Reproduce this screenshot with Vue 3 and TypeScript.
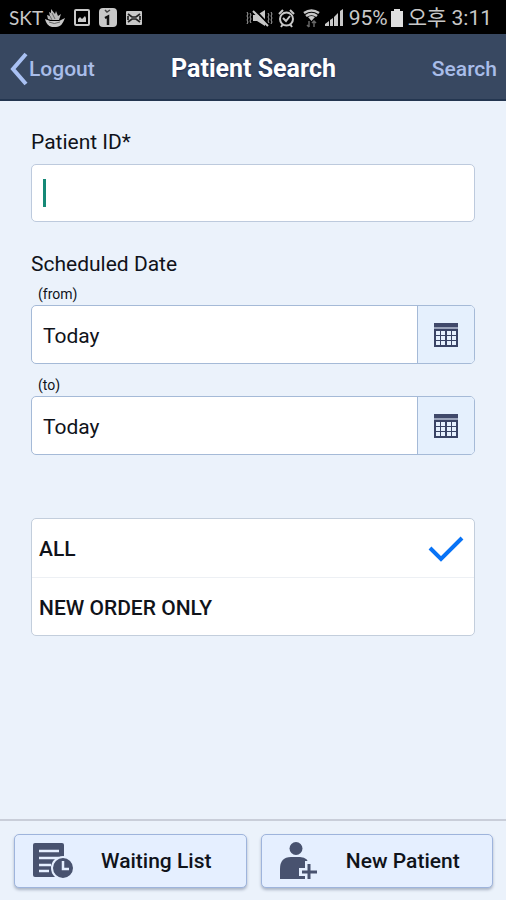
<script setup lang="ts">
import { ref } from 'vue'

type OrderFilter = 'all' | 'new'

interface FilterOption {
  value: OrderFilter
  label: string
}

interface DateField {
  id: string
  caption: string
  value: string
}

const patientId = ref('')
const selectedFilter = ref<OrderFilter>('all')
const dates = ref<DateField[]>([
  { id: 'date-from', caption: '(from)', value: 'Today' },
  { id: 'date-to', caption: '(to)', value: 'Today' },
])
const filters: FilterOption[] = [
  { value: 'all', label: 'ALL' },
  { value: 'new', label: 'NEW ORDER ONLY' },
]
</script>

<template>
  <div class="screen">
    <div class="status">
      <div class="status-group status-left">
        <span class="carrier">SKT</span>
        <svg class="ship" width="20" height="20" viewBox="0 0 20 20" aria-hidden="true">
          <path d="M0 11 5 13H14L20 10C18 15 16 19 11 19H7C3 18 1 15 0 11Z" fill="#c8c8c8" />
          <path d="M3 11 2 7 5 8 4 4 6 5 6 1 10 6 11 3 13 8 16 6 14 12H6Z" fill="#b8b8b8" />
          <path d="M4 14Q9 17 15 14M7 5 10 11M5 8 7 12" fill="none" stroke="#666" />
        </svg>
        <svg width="18" height="18" viewBox="0 0 18 18" aria-hidden="true">
          <rect x="2" y="1" width="14" height="15" rx="1" fill="none" stroke="#c8c8c8" stroke-width="2" />
          <path d="M5 13V10L7 8 9 10 12 7 13 9V13Z" fill="#c8c8c8" />
        </svg>
        <svg width="18" height="20" viewBox="0 0 18 20" aria-hidden="true">
          <rect width="18" height="19" rx="4" fill="#c8c8c8" />
          <path d="M6 2 8 4 11 2" fill="none" stroke="#444" stroke-width="1.500" />
          <path d="M6 10 9 8.500V17" fill="none" stroke="#111" stroke-width="2.500" />
        </svg>
        <svg width="18" height="16" viewBox="0 0 18 16" aria-hidden="true">
          <rect x="1" y="1" width="16" height="14" rx="1" fill="#c8c8c8" />
          <path d="M3 4 7 7H11L15 4M3 12 7 9H11L15 12M3 6V10M15 6V10" fill="none" stroke="#222" stroke-width="1.700" />
        </svg>
      </div>
      <div class="status-group status-right">
        <svg width="27" height="20" viewBox="0 0 27 20" aria-hidden="true">
          <path d="M7 7H11L19 2V18L11 13H7Z" fill="#c8c8c8" />
          <path d="M9 2 23 17" stroke="#000" stroke-width="2" />
          <path d="M7 3 22 18" stroke="#c8c8c8" stroke-width="2" />
          <path d="M1 4 2 6 1 8 2 10 1 12 2 14 1 16M4 5 5 7 4 9 5 11 4 13 5 15M22 5 23 7 22 9 23 11 22 13 23 15M25 4 26 6 25 8 26 10 25 12 26 14 25 16" fill="none" stroke="#a8a8a8" />
        </svg>
        <svg width="17" height="19" viewBox="0 0 17 19" aria-hidden="true">
          <circle cx="8.500" cy="10" r="6.500" fill="none" stroke="#c8c8c8" stroke-width="2" />
          <path d="M1 5 5 1M16 5 12 1M3 18 5 15M14 18 12 15M5 9 8 12 12 7" fill="none" stroke="#c8c8c8" stroke-width="2" />
        </svg>
        <svg class="wifi" width="17" height="19" viewBox="0 0 17 19" aria-hidden="true">
          <path d="M1 4Q8.500-1 16 4M3 7Q8.500 3 14 7" fill="none" stroke="#c8c8c8" stroke-width="2.500" />
          <path d="M5 8Q8.500 6 12 8L8.500 12Z" fill="#c8c8c8" />
          <path d="M6 12V18M4 16 6 18M11 18V12M9 14 11 12 13 14" fill="none" stroke="#666" stroke-width="1.500" />
        </svg>
        <svg width="19" height="18" viewBox="0 0 19 18" aria-hidden="true">
          <path d="M0 17V15L4 12V17ZM5 17V11L8 9V17ZM9 17V8L13 4V17ZM15 17V2L18 0V17Z" fill="#c8c8c8" />
        </svg>
        <span class="battery-level">95%</span>
        <svg class="battery" width="12" height="18" viewBox="0 0 12 18" aria-hidden="true">
          <path d="M0 2H3V0H9V2H12V18H0Z" fill="#dedede" />
        </svg>
        <span class="clock">오후 3:11</span>
      </div>
    </div>

    <header class="header">
      <button class="nav-button back" type="button">
        <svg width="19" height="34" viewBox="0 0 19 34" aria-hidden="true">
          <path d="M16 2 3 17 16 32" fill="none" stroke="#a9c1f3" stroke-width="4" />
        </svg>
        <span>Logout</span>
      </button>
      <h1 class="title">Patient Search</h1>
      <button class="nav-button search" type="button">Search</button>
    </header>

    <main class="content">
      <label class="label" for="patient-id">Patient ID*</label>
      <div class="field patient-field">
        <input id="patient-id" v-model="patientId" class="input" type="text" />
        <span v-if="!patientId" class="caret"></span>
      </div>

      <h2 class="label date-heading">Scheduled Date</h2>
      <div v-for="date in dates" :key="date.id" class="date">
        <label class="caption" :for="date.id">{{ date.caption }}</label>
        <div class="field date-field">
          <input :id="date.id" v-model="date.value" class="input" type="text" />
          <button class="picker" type="button" :aria-labelledby="date.id">
            <svg width="24" height="24" viewBox="0 0 24 24" aria-hidden="true">
              <path d="M0 0H24V4H0Z" fill="#40496a" />
              <path d="M0 4H24V6H0Z" fill="#9aa3ba" />
              <path d="M0 6H24V24H0Z" fill="#394365" />
              <path d="M2 8H6V12H2ZM7 8H11V12H7ZM13 8H17V12H13ZM18 8H22V12H18ZM2 13H6V17H2ZM7 13H11V17H7ZM13 13H17V17H13ZM18 13H22V17H18ZM2 18H6V22H2ZM7 18H11V22H7ZM13 18H17V22H13ZM18 18H22V22H18Z" fill="#e5f0fd" />
            </svg>
          </button>
        </div>
      </div>

      <div class="options" role="radiogroup">
        <label v-for="option in filters" :key="option.value" class="option">
          <input v-model="selectedFilter" class="radio" type="radio" name="order-filter" :value="option.value" />
          <span>{{ option.label }}</span>
          <svg v-if="selectedFilter === option.value" width="36" height="26" viewBox="0 0 36 26" aria-hidden="true">
            <path d="M2 12 13 23 34 2" fill="none" stroke="#0873f6" stroke-width="4" />
          </svg>
        </label>
      </div>
    </main>

    <footer class="footer">
      <button class="action" type="button">
        <svg class="action-icon" width="42" height="38" viewBox="0 0 42 38" aria-hidden="true">
          <path d="M3 1H30Q32 1 32 3V33Q32 35 30 35H3Q1 35 1 33V3Q1 1 3 1Z" fill="#48526f" />
          <path d="M7 9H27M7 16H27M7 23H19M7 29H17" stroke="#e5efff" stroke-width="2.500" />
          <circle cx="31" cy="26" r="11" fill="#48526f" stroke="#e5efff" stroke-width="2" />
          <path d="M31 19V27H37" fill="none" stroke="#e5efff" stroke-width="2.500" />
        </svg>
        <span class="action-text">Waiting List</span>
      </button>
      <button class="action" type="button">
        <svg class="action-icon" width="42" height="38" viewBox="0 0 42 38" aria-hidden="true">
          <circle cx="17" cy="6.500" r="6.500" fill="#48526f" />
          <path d="M1 37V27Q1 15 12 15H21Q30 15 30 25V37Z" fill="#48526f" />
          <path d="M30 19V40M20 30H40" stroke="#e5efff" stroke-width="8" />
          <path d="M30 22V37M23 30H38" stroke="#48526f" stroke-width="3" />
        </svg>
        <span class="action-text">New Patient</span>
      </button>
    </footer>
  </div>
</template>

<style>
body {
  margin: 0;
}
</style>

<style scoped>
.screen {
  display: flex;
  flex-direction: column;
  min-height: 100vh;
  background: #ebf2fb;
  color: #10131a;
  font-family: Roboto, "Noto Sans CJK KR", sans-serif;
  font-size: 21px;
}

button,
input {
  margin: 0;
  padding: 0;
  border: 0;
  font: inherit;
  color: inherit;
}

.status {
  display: flex;
  align-items: center;
  justify-content: space-between;
  box-sizing: border-box;
  height: 34px;
  padding: 2px 14px 0 9px;
  background: #000;
  color: #c8c8c8;
  font-size: 21px;
  line-height: 32px;
  white-space: nowrap;
}

.status-group {
  display: flex;
  align-items: center;
}

.status-left {
  gap: 8px;
}

.carrier {
  font-family: Lato, sans-serif;
  font-size: 19px;
}

.carrier + .ship {
  margin-left: -6px;
}

.status-right {
  gap: 5px;
}

.wifi {
  margin-left: 3px;
}

.battery {
  margin-left: -2px;
}

.header {
  display: grid;
  grid-template-columns: 1fr auto 1fr;
  align-items: center;
  box-sizing: border-box;
  height: 67px;
  padding: 4px 9px 0 10px;
  border-bottom: 2px solid #243650;
  background: #384861;
}

.title {
  margin: 0;
  color: #fff;
  font-size: 25px;
  font-weight: 700;
  line-height: 32px;
  text-shadow: 0 1px 2px #182858;
}

.nav-button {
  display: flex;
  align-items: center;
  background: none;
  color: #a9bde9;
  font-weight: 500;
  line-height: 34px;
}

.back {
  justify-self: start;
}

.search {
  justify-self: end;
}

.content {
  flex: 1;
  padding: 28px 31px 24px;
}

.label {
  display: block;
  margin: 0;
  font-size: 21px;
  font-weight: 400;
  line-height: 26px;
}

.field {
  display: flex;
  box-sizing: border-box;
  height: 59px;
  border: 1px solid #bdcadd;
  border-radius: 5px;
  background: #fff;
  overflow: hidden;
}

.patient-field {
  position: relative;
  height: 58px;
  margin-top: 9px;
}

.input {
  flex: 1;
  min-width: 0;
  padding: 2px 11px 0;
  background: transparent;
  outline: none;
}

.caret {
  position: absolute;
  top: 14px;
  left: 11px;
  width: 3px;
  height: 28px;
  background: #168977;
  pointer-events: none;
}

.date-heading {
  margin-top: 29px;
}

.date {
  margin-bottom: 9px;
}

.caption {
  display: block;
  padding: 2px 7px 0;
  font-size: 14px;
  line-height: 21px;
}

.date-heading + .date .caption {
  padding-top: 7px;
}

.date-field {
  border-color: #a5bad7;
}

.date-field .input {
  padding-top: 3px;
}

.picker {
  display: grid;
  place-items: center;
  width: 57px;
  border-left: 1px solid #a5bad7;
  background: #e5f0fd;
}

.options {
  margin-top: 63px;
  border: 1px solid #c3cedc;
  border-radius: 5px;
  background: #fff;
}

.option {
  display: flex;
  align-items: center;
  justify-content: space-between;
  box-sizing: border-box;
  height: 58px;
  padding: 2px 10px 0 7px;
  font-weight: 500;
}

.option + .option {
  border-top: 1px solid #edf0f4;
}

.radio {
  position: absolute;
  width: 1px;
  height: 1px;
  appearance: none;
  opacity: 0;
}

.footer {
  display: grid;
  grid-template-columns: 1fr 1fr;
  gap: 14px;
  padding: 13px 13px 12px 14px;
  border-top: 2px solid #c9ced9;
  background: #ebf2fb;
}

.action {
  display: flex;
  align-items: center;
  box-sizing: border-box;
  height: 54px;
  padding: 0 17px;
  border: 1px solid #9eb4dc;
  border-radius: 5px;
  background: #e5efff;
  box-shadow: 0 2px 3px #abb5c6;
  font-weight: 500;
}

.action-icon {
  flex: none;
}

.action-text {
  flex: 1;
  padding-left: 10px;
  text-align: center;
}
</style>
